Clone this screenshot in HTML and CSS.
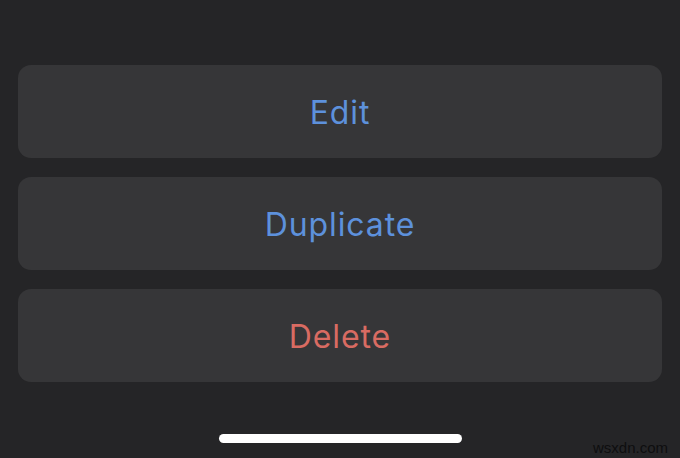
FILE: index.html
```html
<!DOCTYPE html>
<html>
<head>
<meta charset="utf-8">
<link rel="stylesheet" href="styles.css">
</head>
<body>
<div class="sheet">
  <div class="actions">
    <div class="action action-blue">Edit</div>
    <div class="action action-blue">Duplicate</div>
    <div class="action action-red">Delete</div>
  </div>
  <div class="home-bar"></div>
  <div class="watermark">wsxdn.com</div>
</div>
</body>
</html>
```
FILE: styles.css
```css
html, body {
  margin: 0;
  padding: 0;
  background: #252527;
}
.sheet {
  position: relative;
  width: 680px;
  height: 458px;
  overflow: hidden;
  background: #252527;
  font-family: Inter, "Liberation Sans", sans-serif;
}
.actions {
  display: flex;
  flex-direction: column;
  gap: 19px;
  padding: 65px 18px 0;
}
.action {
  height: 93px;
  border-radius: 13px;
  background: #363638;
  display: flex;
  align-items: center;
  justify-content: center;
  padding-top: 2px;
  box-sizing: border-box;
  font-size: 32px;
  letter-spacing: 0.9px;
}
.action-blue { color: #5d91dc; }
.action-red { color: #d96b62; }
.home-bar {
  width: 243px;
  height: 9px;
  border-radius: 5px;
  background: #ffffff;
  margin: 52px auto 0;
}
.watermark {
  position: absolute;
  right: 12px;
  bottom: 2px;
  font-family: "Liberation Sans", sans-serif;
  font-size: 15px;
  color: #0e0e0f;
}
```
